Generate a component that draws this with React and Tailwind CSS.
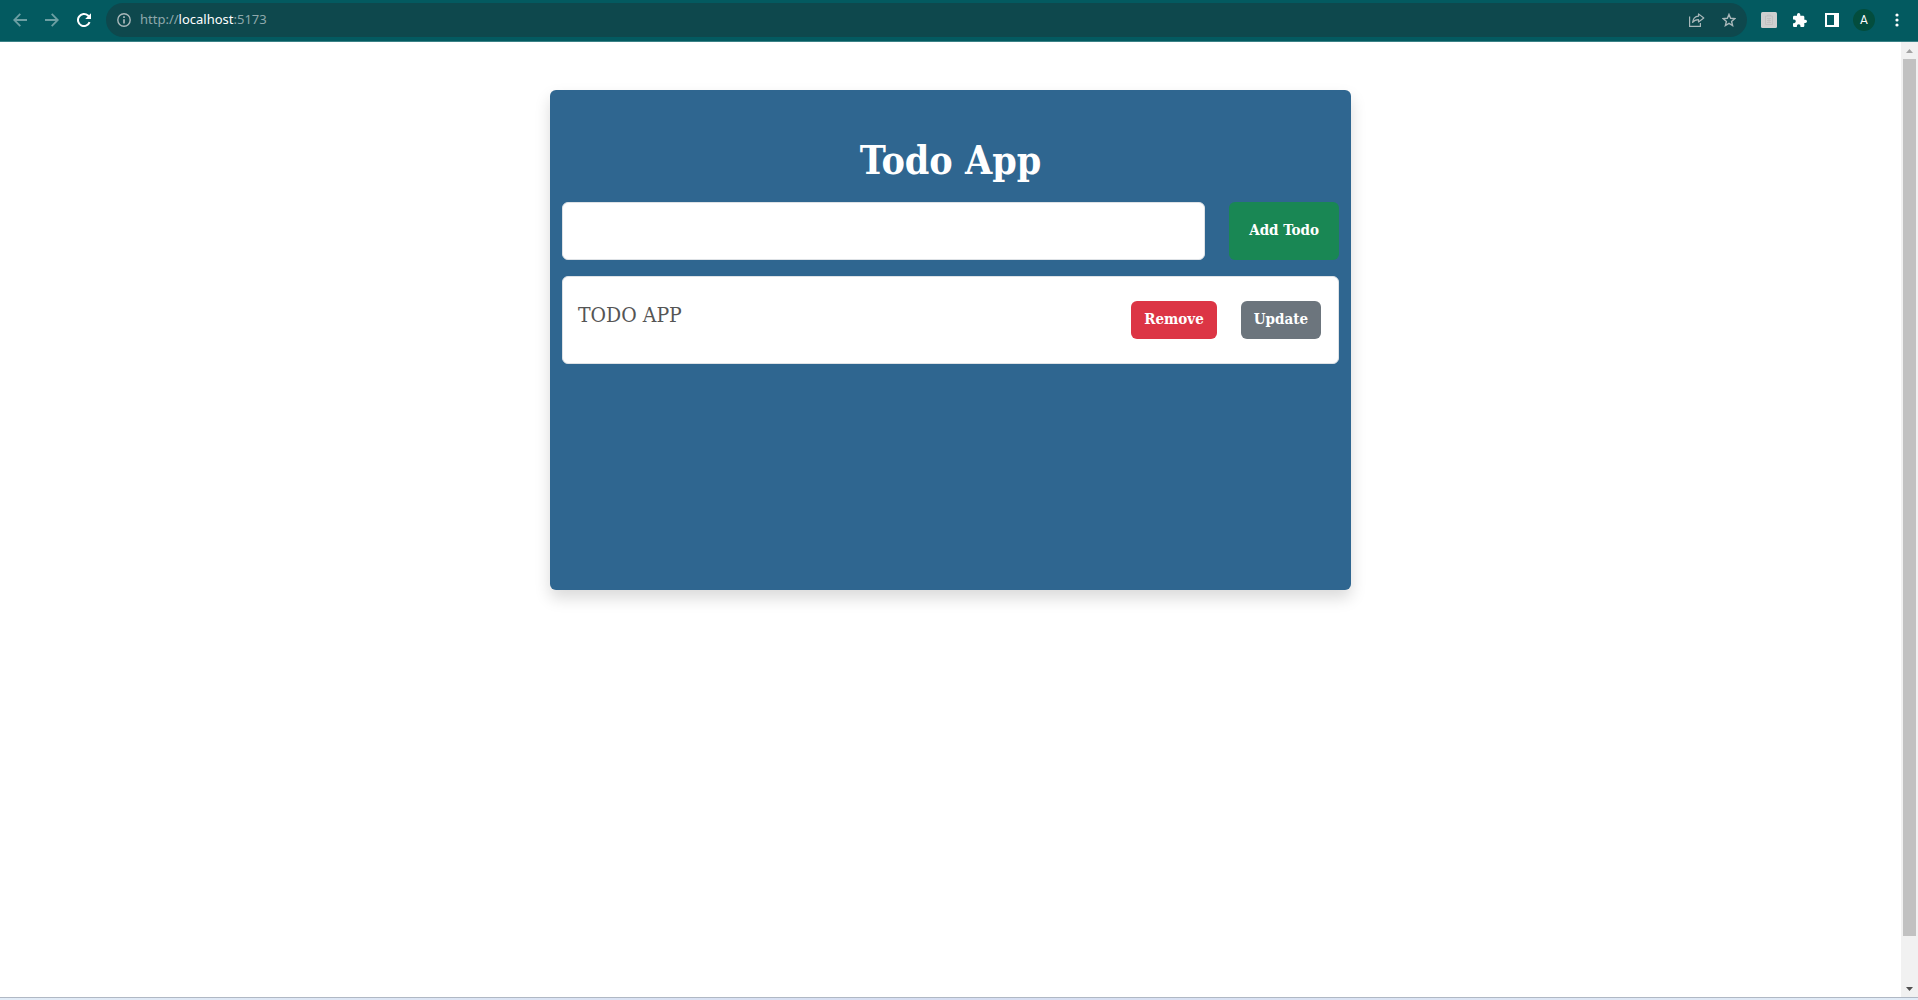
function BackIcon() {
  return (
    <svg viewBox="0 0 14 14" className="size-3.5" fill="none" stroke="currentColor" strokeWidth="1.8">
      <path d="M14 7H1.5M7.3.8 1.2 7l6.1 6.2" />
    </svg>
  );
}

function ForwardIcon() {
  return (
    <svg viewBox="0 0 14 14" className="size-3.5" fill="none" stroke="currentColor" strokeWidth="1.8">
      <path d="M0 7h12.5M6.7.8 12.8 7l-6.1 6.2" />
    </svg>
  );
}

function ReloadIcon() {
  return (
    <svg viewBox="0 0 14 14" className="size-3.5" fill="none" stroke="currentColor" strokeWidth="2">
      <path d="M12.6 9.2A6 6 0 1 1 11 2.6L12 3.6" />
      <path d="M14 .2V6H8.2z" fill="currentColor" stroke="none" />
    </svg>
  );
}

function InfoIcon() {
  return (
    <svg viewBox="0 0 14 14" className="size-3.5" fill="none" stroke="currentColor" strokeWidth="1.4">
      <circle cx="7" cy="7" r="6.2" />
      <path d="M7 6.2v4.3M7 3.3v1.7" strokeWidth="1.7" />
    </svg>
  );
}

function ShareIcon() {
  return (
    <svg viewBox="0 0 16 14" className="h-3.5 w-4" fill="none" stroke="currentColor" strokeWidth="1.2">
      <path d="M.6 3.5v9.9h10.8V10" />
      <path d="M9.5.9 14.8 5 9.5 9V6.6C6.8 6.6 5 7.3 3.6 9.4 4 6 6 3.5 9.5 3.2z" strokeLinejoin="round" />
    </svg>
  );
}

function StarIcon() {
  return (
    <svg viewBox="0 0 14 14" className="size-3.5" fill="none" stroke="currentColor" strokeWidth="1.4">
      <path d="m7 1.4 1.6 3.9 4.2.3-3.2 2.8 1 4.1L7 10.3l-3.6 2.2 1-4.1-3.2-2.8 4.2-.3z" />
    </svg>
  );
}

function ClipboardIcon() {
  return (
    <svg viewBox="0 0 16 16" className="size-4" fill="none">
      <rect width="16" height="16" rx="1.5" fill="#cfcfcf" />
      <path d="M4.5 4h7v8.5h-7zM6.5 4V3h3v1M6 6.5h4M6 8.5h4M6 10.5h4M8 6.5v4" stroke="#bfbfbf" strokeWidth=".8" />
    </svg>
  );
}

function PuzzleIcon() {
  return (
    <svg viewBox="2 1 21 21" className="size-3.5" fill="currentColor">
      <path d="M20.5 11H19V7c0-1.1-.9-2-2-2h-4V3.5a2.5 2.5 0 0 0-5 0V5H4c-1.1 0-2 .9-2 2v3.8h1.5a2.7 2.7 0 0 1 0 5.4H2V20c0 1.1.9 2 2 2h3.8v-1.5a2.7 2.7 0 0 1 5.4 0V22H17c1.1 0 2-.9 2-2v-4h1.5a2.5 2.5 0 0 0 0-5z" />
    </svg>
  );
}

function PanelIcon() {
  return (
    <svg viewBox="0 0 14 14" className="size-3.5" fill="currentColor">
      <path fillRule="evenodd" d="M0 0h14v14H0zM2 2v10h7V2z" />
    </svg>
  );
}

function MoreIcon() {
  return (
    <svg viewBox="0 0 4 14" className="h-3.5 w-1" fill="currentColor">
      <circle cx="2" cy="2" r="1.6" />
      <circle cx="2" cy="7" r="1.6" />
      <circle cx="2" cy="12" r="1.6" />
    </svg>
  );
}

function Toolbar() {
  return (
    <header className="flex h-[42px] shrink-0 items-center border-b border-[#3b8287] bg-[#035a60] pr-[19px] pb-px pl-[13px] text-white">
      <nav className="flex gap-[18px]" aria-label="History">
        <button type="button" aria-label="Back" className="text-[#6c9fa3]"><BackIcon /></button>
        <button type="button" aria-label="Forward" className="text-[#6c9fa3]"><ForwardIcon /></button>
        <button type="button" aria-label="Reload"><ReloadIcon /></button>
      </nav>
      <div className="ml-[15px] flex h-[34px] flex-1 items-center gap-[17px] rounded-full bg-[#0e484d] px-[11px] text-[#a9b8ba]">
        <button type="button" aria-label="Site information"><InfoIcon /></button>
        <a href="http://localhost:5173" className="-ml-2 flex-1 font-['Noto_Sans',sans-serif] text-[13px] text-[#8fa9ac]">
          http://<span className="text-white">localhost</span>:5173
        </a>
        <button type="button" aria-label="Share"><ShareIcon /></button>
        <button type="button" aria-label="Bookmark"><StarIcon /></button>
      </div>
      <div className="ml-3.5 flex items-center gap-4">
        <button type="button" aria-label="Clipboard"><ClipboardIcon /></button>
        <button type="button" aria-label="Extensions"><PuzzleIcon /></button>
        <button type="button" aria-label="Side panel" className="ml-0.5"><PanelIcon /></button>
        <button type="button" aria-label="Profile" className="-ml-0.5 size-[22px] rounded-full bg-[#034d3d] font-['Roboto',sans-serif] text-xs leading-[22px]">A</button>
        <button type="button" aria-label="Menu" className="ml-1"><MoreIcon /></button>
      </div>
    </header>
  );
}

function Scrollbar() {
  return (
    <div className="flex w-[17px] shrink-0 flex-col items-center bg-[#f1f1f1]" aria-hidden="true">
      <svg viewBox="0 0 17 17" className="size-[17px] shrink-0" fill="#a3a3a3"><path d="M5 11h7L8.5 7z" /></svg>
      <div className="w-[13px] flex-1 bg-[#c1c1c1]" />
      <div className="h-11 shrink-0" />
      <svg viewBox="0 0 17 17" className="size-[17px] shrink-0" fill="#505050"><path d="M5 7h7l-3.5 4z" /></svg>
    </div>
  );
}

function TodoItem({ title }) {
  return (
    <li className="flex items-start justify-between rounded-md border border-[#dee2e6] bg-white py-6 pr-[17px] pl-[15px]">
      <span className="text-[21px] leading-7 text-[#555]">{title}</span>
      <div className="flex gap-6">
        <button type="button" className="h-[38px] rounded-md bg-[#dc3545] px-[13px] pb-0.5 font-bold text-white">Remove</button>
        <button type="button" className="h-[38px] rounded-md bg-[#6c757d] px-[13px] pb-0.5 font-bold text-white">Update</button>
      </div>
    </li>
  );
}

export default function App() {
  return (
    <div className="flex h-screen flex-col bg-white">
      <Toolbar />
      <div className="flex flex-1">
        <main className="flex-1 px-4 pt-12 font-['DejaVu_Serif_Condensed','DejaVu_Serif',serif] text-[15px]">
          <section className="mx-auto min-h-[500px] max-w-[801px] rounded-md bg-[#2f6690] px-3 pt-11 shadow-[0_8px_16px_rgba(0,0,0,0.15)]">
            <h1 className="text-center text-[39px] leading-[52px] font-bold text-white">Todo App</h1>
            <form className="mt-4 flex gap-6" onSubmit={(event) => event.preventDefault()}>
              <input type="text" aria-label="New todo" className="h-[58px] min-w-0 flex-1 rounded-md border border-[#dee2e6] bg-white px-3 text-base outline-none" />
              <button type="submit" className="h-[58px] rounded-md bg-[#198754] px-5 pb-0.5 font-bold text-white">Add Todo</button>
            </form>
            <ul className="mt-4">
              <TodoItem title="TODO APP" />
            </ul>
          </section>
        </main>
        <Scrollbar />
      </div>
      <footer className="h-[3px] shrink-0 border-t border-[#b0b8c4] bg-linear-to-r from-[#e2ecf7] via-[#d6def2] to-[#e2ecf7]" />
    </div>
  );
}
